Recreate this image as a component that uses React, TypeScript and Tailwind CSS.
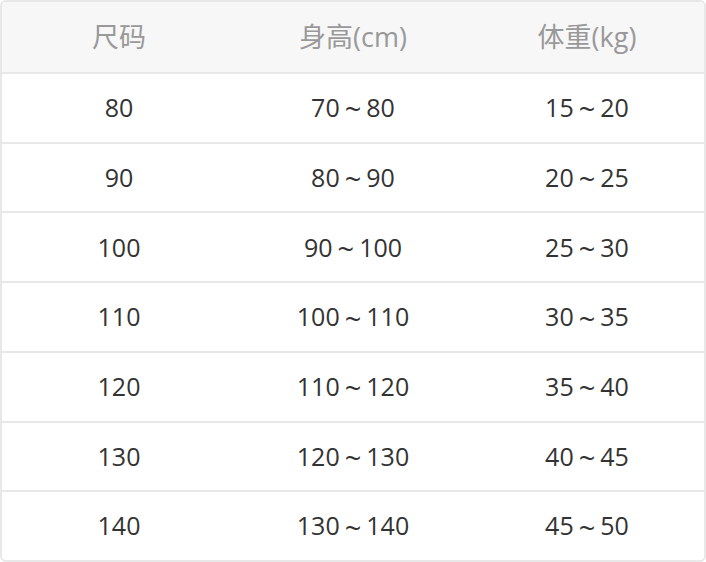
import React from "react";

const rows = [
  ["80", "70", "80", "15", "20"],
  ["90", "80", "90", "20", "25"],
  ["100", "90", "100", "25", "30"],
  ["110", "100", "110", "30", "35"],
  ["120", "110", "120", "35", "40"],
  ["130", "120", "130", "40", "45"],
  ["140", "130", "140", "45", "50"],
];

function Range({ a, b }: { a: string; b: string }) {
  return (
    <div className="flex items-center justify-center gap-[5px]">
      <span>{a}</span>
      <span className="text-[29px] leading-none relative top-[1px]">~</span>
      <span>{b}</span>
    </div>
  );
}

export default function App() {
  return (
    <div className="w-[706px] h-[562px] bg-white">
      <div
        className="w-full h-full border-2 border-[#e8e8e8] rounded-md overflow-hidden flex flex-col text-[25px]"
        style={{ fontFamily: '"Open Sans", "Noto Sans CJK SC", sans-serif' }}
      >
        <div className="h-[70px] shrink-0 grid grid-cols-3 items-center text-center bg-[#f7f7f7] text-[#999999] text-[27px]">
          <div>尺码</div>
          <div>身高(cm)</div>
          <div>体重(kg)</div>
        </div>
        {rows.map((r, i) => (
          <div
            key={i}
            className="flex-1 grid grid-cols-3 items-center text-center border-t-2 border-[#e8e8e8] text-[#333333]"
          >
            <div>{r[0]}</div>
            <Range a={r[1]} b={r[2]} />
            <Range a={r[3]} b={r[4]} />
          </div>
        ))}
      </div>
    </div>
  );
}
